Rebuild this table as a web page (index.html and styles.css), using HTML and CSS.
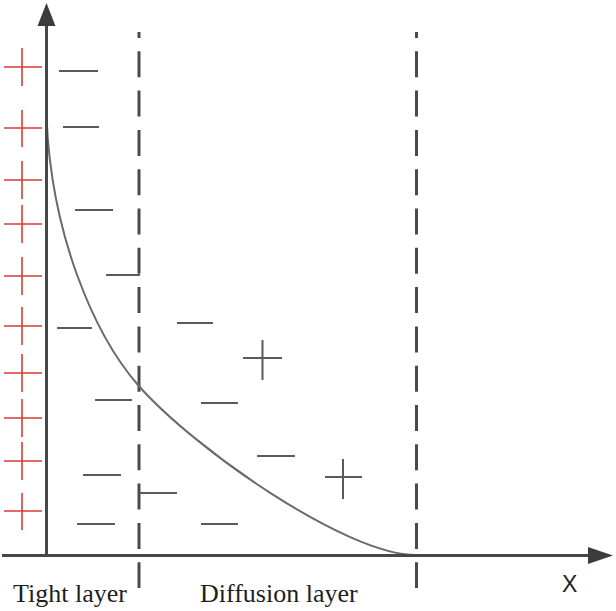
FILE: index.html
```html
<!DOCTYPE html>
<html>
<head>
<meta charset="utf-8">
<link rel="stylesheet" href="styles.css">
</head>
<body>
<svg class="diagram" width="616" height="611" viewBox="0 0 616 611" xmlns="http://www.w3.org/2000/svg">
  <!-- red plus charges on the wall -->
  <g class="red">
    <path d="M4 67H42M22 48V86"/>
    <path d="M4 128H42M22 110V147"/>
    <path d="M4 180H42M22 161V199"/>
    <path d="M4 224H42M22 205V243"/>
    <path d="M4 276H42M22 257V295"/>
    <path d="M4 326H42M22 307V345"/>
    <path d="M4 373H42M22 354V392"/>
    <path d="M4 418H42M22 399V437"/>
    <path d="M4 461H42M22 442V480"/>
    <path d="M4 511H42M22 493V530"/>
  </g>

  <!-- dashed boundaries -->
  <g class="dash">
    <line x1="139" y1="32" x2="139" y2="588"/>
    <line x1="416.5" y1="32" x2="416.5" y2="588"/>
  </g>

  <!-- minus charges -->
  <g class="ion">
    <path d="M59 71H98"/>
    <path d="M63 127H99"/>
    <path d="M75 210H113"/>
    <path d="M106 275H140"/>
    <path d="M57 328H92"/>
    <path d="M177 323H213"/>
    <path d="M95 400H132"/>
    <path d="M201 403H238"/>
    <path d="M257 456H295"/>
    <path d="M83 475H121"/>
    <path d="M139 493H177"/>
    <path d="M77 524H115"/>
    <path d="M201 524H238"/>
    <!-- plus charges -->
    <path d="M243 358H282M262.5 340V380"/>
    <path d="M325 477H362M343 459V499"/>
  </g>

  <!-- potential curve -->
  <path class="curve" d="M46 95 C46.5 235 98 339 138 385 C193 448 346 555 416 555 L470 556"/>

  <!-- axes -->
  <g class="axis">
    <line x1="46.5" y1="22" x2="46.5" y2="556"/>
    <line x1="2" y1="555.5" x2="592" y2="555.5"/>
  </g>
  <polygon class="arrow" points="46.5,3 55.5,26 37.5,26"/>
  <polygon class="arrow" points="613,555.5 588,547 588,564"/>

  <text class="label" x="13" y="602">Tight layer</text>
  <text class="label" x="200" y="602">Diffusion layer</text>
  <text class="xlabel" x="562" y="592">X</text>
</svg>
</body>
</html>
```

FILE: styles.css
```css
html, body {
  margin: 0;
  padding: 0;
  background: #ffffff;
}

.diagram {
  display: block;
}

.red path {
  fill: none;
  stroke: #dc3a3a;
  stroke-width: 1.6;
}

.dash line {
  stroke: #4a4a4a;
  stroke-width: 3;
  stroke-dasharray: 26 13.3;
  stroke-dashoffset: 20;
}

.ion path {
  fill: none;
  stroke: #5a5a5a;
  stroke-width: 2;
}

.curve {
  fill: none;
  stroke: #6a6a6a;
  stroke-width: 2;
}

.axis line {
  stroke: #474747;
  stroke-width: 3;
}

.arrow {
  fill: #3c3c3c;
}

.label {
  font-family: "Liberation Serif", "Times New Roman", serif;
  font-size: 26px;
  fill: #1e1e1e;
}

.xlabel {
  font-family: "Liberation Sans", Arial, sans-serif;
  font-size: 23px;
  fill: #1e1e1e;
}
```
